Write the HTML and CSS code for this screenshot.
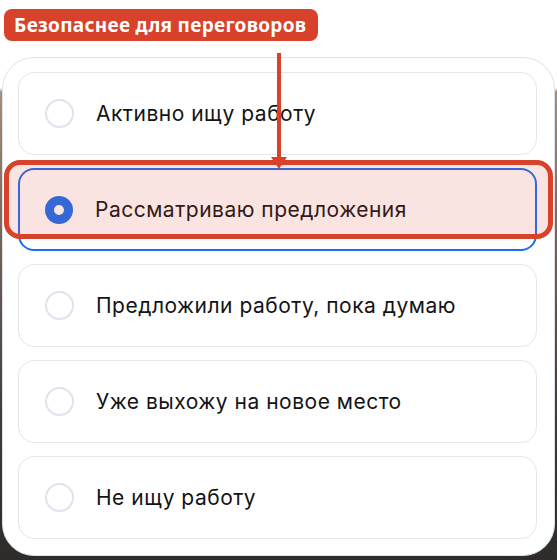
FILE: index.html
```html
<!DOCTYPE html>
<html lang="ru">
<head>
<meta charset="utf-8">
<link rel="stylesheet" href="styles.css">
</head>
<body>
<div class="stage">
  <div class="badge">Безопаснее для переговоров</div>
  <div class="panel">
    <div class="option"><span class="radio"></span><span class="label">Активно ищу работу</span></div>
    <div class="option selected"><span class="radio"></span><span class="label">Рассматриваю предложения</span></div>
    <div class="option"><span class="radio"></span><span class="label">Предложили работу, пока думаю</span></div>
    <div class="option"><span class="radio"></span><span class="label">Уже выхожу на новое место</span></div>
    <div class="option"><span class="radio"></span><span class="label">Не ищу работу</span></div>
  </div>
  <div class="highlight"></div>
  <svg class="arrow" width="20" height="120" viewBox="0 0 20 120">
    <rect x="8" y="0" width="4" height="108" fill="#d8412a"/>
    <polygon points="2,104 18,104 10,116" fill="#d8412a"/>
  </svg>
</div>
</body>
</html>
```
FILE: styles.css
```css
html, body {
  margin: 0;
  padding: 0;
}
body {
  width: 557px;
  height: 560px;
  overflow: hidden;
  background: linear-gradient(to bottom, #ffffff 0, #ffffff 88px, #a58d76 92px, #6f5f52 260px, #3f3b39 420px, #2e2b2a 560px);
  font-family: Inter, "Noto Sans", sans-serif;
}
.stage {
  position: relative;
  width: 557px;
  height: 560px;
  background: linear-gradient(to bottom, #ffffff 0, #ffffff 88px, transparent 88px);
  padding-top: 9px;
  box-sizing: border-box;
}
.badge {
  margin-left: 4px;
  width: 314px;
  height: 32px;
  box-sizing: border-box;
  background: #d8412a;
  border-radius: 8px;
  color: #fff;
  font-family: "Noto Sans", sans-serif;
  font-weight: 700;
  font-size: 19px;
  letter-spacing: 0.3px;
  line-height: 32px;
  padding-left: 10px;
  white-space: nowrap;
}
.panel {
  margin-top: 16px;
  margin-left: 2px;
  width: 553px;
  box-sizing: border-box;
  background: #fff;
  border: 1px solid #dde2ea;
  border-radius: 32px;
  padding: 14px 17px 16px 15px;
  display: flex;
  flex-direction: column;
  gap: 13px;
}
.option {
  height: 83px;
  box-sizing: border-box;
  border: 1px solid #e3e7ee;
  border-radius: 16px;
  display: flex;
  align-items: center;
  padding-left: 26px;
  gap: 22px;
  background: #fff;
}
.option.selected {
  border: 2px solid #1b6ff2;
  padding-left: 25px;
}
.radio {
  width: 29px;
  height: 29px;
  box-sizing: border-box;
  border: 2px solid #dfe4ec;
  border-radius: 50%;
  flex: none;
  background: #fff;
}
.selected .radio {
  width: 28px;
  height: 28px;
  border: 9px solid #1b6ff2;
}
.label {
  font-size: 21px;
  letter-spacing: 0.5px;
  color: #141414;
  white-space: nowrap;
}
.highlight {
  position: absolute;
  left: 4px;
  top: 160px;
  width: 549px;
  height: 79px;
  box-sizing: border-box;
  border: 5px solid #d8412a;
  border-radius: 16px;
  background: rgba(216, 65, 42, 0.14);
}
.arrow {
  position: absolute;
  left: 269px;
  top: 53px;
}
```
